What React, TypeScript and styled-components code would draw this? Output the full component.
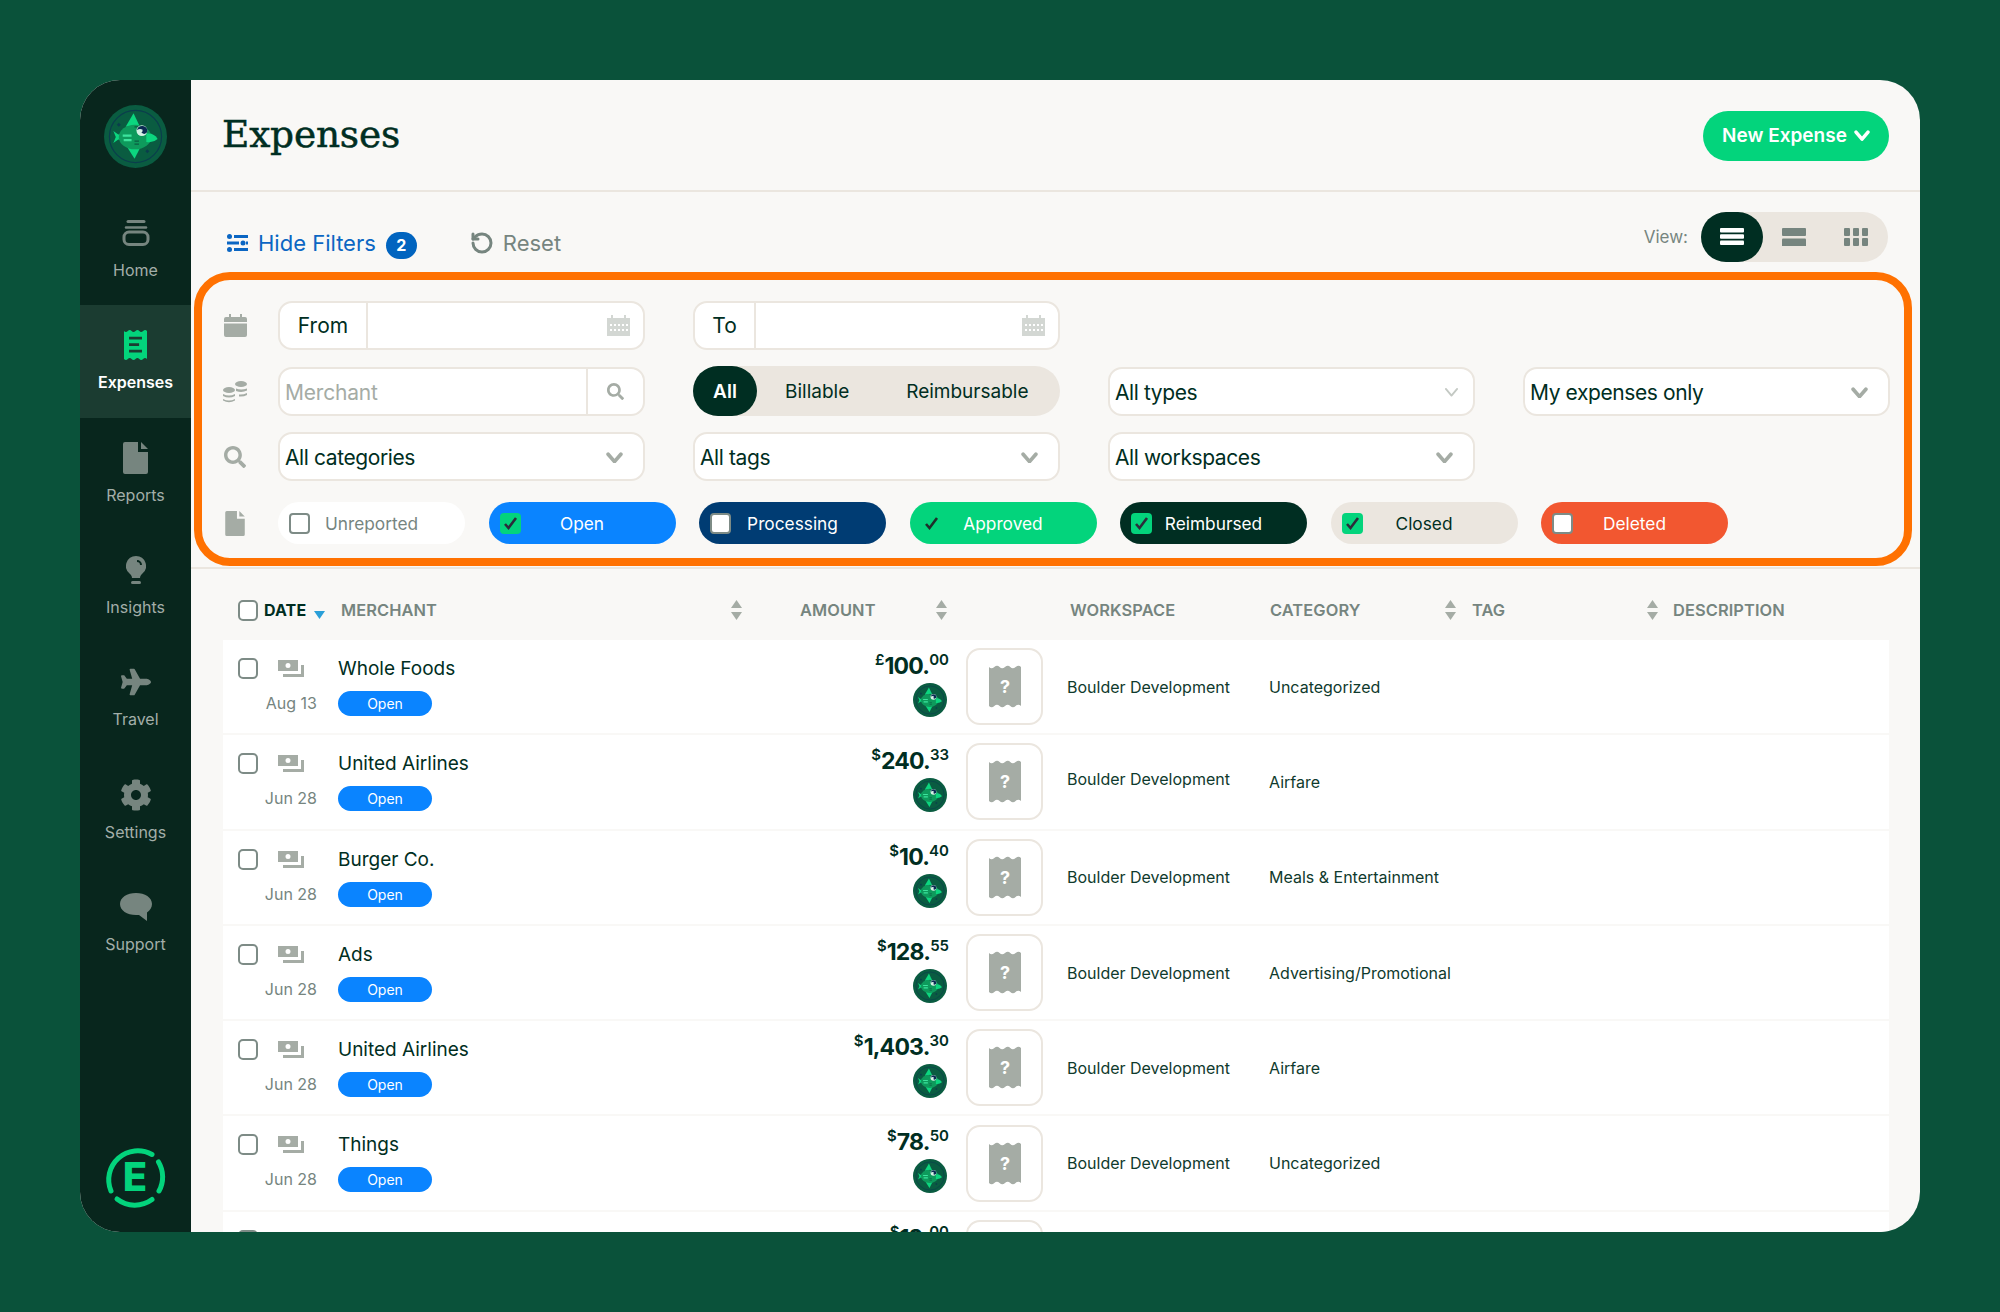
import React from "react";
import styled, { createGlobalStyle } from "styled-components";
import { FaCog, FaPlane, FaSearch } from "react-icons/fa";
import { RotateCcw } from "lucide-react";

const INK = "#002e22";
const MUTED = "#76857f";
const ICON = "#a5aca5";
const LINE = "#ebe6df";
const GREEN = "#03d47c";
const SANS = `Inter, "Liberation Sans", sans-serif`;

const Global = createGlobalStyle`
  html, body { margin: 0; padding: 0; background: #0a523a; }
  body { font-family: ${SANS}; color: ${INK}; }
  * { box-sizing: border-box; }
`;

const Page = styled.div`
  width: 2000px;
  height: 1312px;
  padding: 80px;
  background: #0a523a;
`;
const Frame = styled.div`
  display: flex;
  height: 1152px;
  border-radius: 40px;
  overflow: hidden;
  background: #f9f8f6;
`;
const Sidebar = styled.nav`
  flex: 0 0 111px;
  display: flex;
  flex-direction: column;
  align-items: stretch;
  background: #08261d;
  padding: 25px 0 24px;
`;
const LogoSlot = styled.div`
  display: flex;
  justify-content: center;
  margin-bottom: 25px;
`;
const BottomSlot = styled.div`
  margin-top: auto;
  display: flex;
  justify-content: center;
  padding-right: 1px;
`;
const NavItem = styled.div<{ $active?: boolean }>`
  height: 112.35px;
  padding-top: 22px;
  display: flex;
  flex-direction: column;
  align-items: center;
  background: ${(p) => (p.$active ? "#1b3c31" : "transparent")};
`;
const NavIcon = styled.div<{ $active?: boolean }>`
  height: 36px;
  display: flex;
  align-items: center;
  justify-content: center;
  color: ${(p) => (p.$active ? GREEN : MUTED)};
`;
const NavLabel = styled.div<{ $active?: boolean }>`
  margin-top: 9px;
  line-height: 20px;
  font-size: 16px;
  font-weight: ${(p) => (p.$active ? 600 : 400)};
  color: ${(p) => (p.$active ? "#ffffff" : "#a3aea9")};
`;
const Main = styled.main`
  flex: 1;
  min-width: 0;
  display: flex;
  flex-direction: column;
`;
const Header = styled.header`
  flex: 0 0 112px;
  display: flex;
  align-items: center;
  justify-content: space-between;
  padding: 0 31px 0 31px;
  border-bottom: 2px solid ${LINE};
`;
const Title = styled.h1`
  margin: -3px 0 0;
  font-family: "DejaVu Serif", "Liberation Serif", serif;
  font-size: 37.5px;
  font-weight: 400;
  color: ${INK};
  letter-spacing: -0.2px;
  -webkit-text-stroke: 0.5px ${INK};
`;
const NewButton = styled.button`
  width: 186px;
  height: 50px;
  margin-top: 1px;
  border: 0;
  border-radius: 25px;
  background: ${GREEN};
  color: #fff;
  font-family: ${SANS};
  font-size: 19px;
  font-weight: 600;
  display: flex;
  align-items: center;
  justify-content: center;
  gap: 7px;
  padding: 0;
`;
const Toolbar = styled.div`
  flex: 0 0 80px;
  display: flex;
  padding: 0 32px 0 36px;
  justify-content: space-between;
  align-items: flex-start;
`;
const ToolLeft = styled.div`
  display: flex;
  align-items: center;
  margin-top: 37px;
  height: 28px;
`;
const HideFilters = styled.span`
  display: flex;
  align-items: center;
  gap: 10px;
  color: #0b66c3;
  font-size: 22px;
`;
const Badge = styled.span`
  width: 31px;
  height: 27px;
  margin: 4px 0 0 10px;
  border-radius: 14px;
  background: #0164bf;
  color: #fff;
  font-size: 16px;
  font-weight: 700;
  display: flex;
  align-items: center;
  justify-content: center;
`;
const Reset = styled.span`
  display: flex;
  align-items: center;
  gap: 9px;
  margin-left: 53px;
  color: ${MUTED};
  font-size: 22px;
`;
const ViewGroup = styled.div`
  display: flex;
  align-items: center;
  gap: 13px;
  margin-top: 20px;
`;
const ViewLabel = styled.span`
  font-size: 17px;
  color: ${MUTED};
`;
const Toggle = styled.div`
  display: flex;
  align-items: center;
  width: 187px;
  height: 50px;
  border-radius: 25px;
  background: ${LINE};
`;
const ToggleItem = styled.div<{ $active?: boolean }>`
  width: 62px;
  height: 50px;
  border-radius: 25px;
  display: flex;
  align-items: center;
  justify-content: center;
  background: ${(p) => (p.$active ? INK : "transparent")};
  color: ${(p) => (p.$active ? "#fff" : MUTED)};
`;
const FilterPanel = styled.section`
  flex: 0 0 294px;
  margin: 0 8px 0 3px;
  border: 8px solid #ff7101;
  border-radius: 36px;
  padding: 21px 0 0;
`;
const FilterRow = styled.div<{ $gap?: number }>`
  display: flex;
  align-items: center;
  margin-bottom: ${(p) => p.$gap ?? 16}px;
`;
const IconSlot = styled.div`
  flex: 0 0 66px;
  margin-right: 10px;
  display: flex;
  justify-content: center;
  color: ${ICON};
`;
const FieldGrid = styled.div`
  display: grid;
  grid-template-columns: repeat(4, 367px);
  column-gap: 48px;
`;
const Field = styled.div`
  height: 49px;
  display: flex;
  align-items: stretch;
  background: #fff;
  border: 2px solid ${LINE};
  border-radius: 14px;
  font-size: 21px;
  color: ${INK};
  overflow: hidden;
`;
const FieldPrefix = styled.div<{ $w: number }>`
  flex: 0 0 ${(p) => p.$w}px;
  display: flex;
  align-items: center;
  justify-content: center;
  border-right: 2px solid ${LINE};
`;
const FieldBody = styled.div`
  flex: 1;
  display: flex;
  align-items: center;
  justify-content: flex-end;
  padding-right: 13px;
  color: #d3d7d3;
`;
const MerchantText = styled.div`
  flex: 1;
  display: flex;
  align-items: center;
  padding: 2px 0 0 5px;
  color: ${ICON};
  letter-spacing: -0.2px;
`;
const SearchCell = styled.div`
  flex: 0 0 57px;
  display: flex;
  align-items: center;
  justify-content: center;
  border-left: 2px solid ${LINE};
  color: ${ICON};
`;
const SelectField = styled(Field)`
  align-items: center;
  justify-content: space-between;
  padding: 2px 20px 0 5px;
  letter-spacing: -0.4px;
`;
const ThinChevron = styled.span`
  display: flex;
  margin-right: -6px;
`;
const Segmented = styled.div`
  height: 50px;
  margin-top: -1px;
  display: flex;
  align-items: center;
  border-radius: 25px;
  background: ${LINE};
  font-size: 19px;
  color: ${INK};
`;
const SegmentOn = styled.div`
  width: 64px;
  height: 50px;
  border-radius: 25px;
  background: ${INK};
  color: #fff;
  font-weight: 600;
  display: flex;
  align-items: center;
  justify-content: center;
`;
const Segment = styled.div<{ $left: number }>`
  margin-left: ${(p) => p.$left}px;
`;
const ChipRow = styled.div`
  display: flex;
  gap: 23.5px;
`;
const Chip = styled.div<{ $bg: string; $fg: string }>`
  width: 187px;
  height: 42px;
  border-radius: 21px;
  padding: 0 11px;
  display: grid;
  grid-template-columns: 1fr auto 1fr;
  align-items: center;
  background: ${(p) => p.$bg};
  color: ${(p) => p.$fg};
  font-size: 17.3px;
`;
const ChipBox = styled.div<{ $state: "off" | "white" | "on" | "bare" }>`
  width: 21px;
  height: 21px;
  border-radius: 4px;
  display: flex;
  align-items: center;
  justify-content: center;
  border: ${(p) =>
    p.$state === "off" || p.$state === "white" ? `2px solid #7d8b86` : "0"};
  background: ${(p) =>
    p.$state === "on" ? GREEN : p.$state === "white" ? "#fff" : "transparent"};
`;
const Divider = styled.div`
  height: 2px;
  margin-top: 1px;
  background: ${LINE};
  flex: 0 0 2px;
`;
const Table = styled.div`
  flex: 1;
  min-height: 0;
  overflow: hidden;
  padding: 0 31px 0 32px;
`;
const HeadRow = styled.div`
  height: 71px;
  padding-top: 11px;
  display: grid;
  grid-template-columns: 118px 459px 270px 200px 202px 201px 1fr;
  align-items: center;
  font-size: 16.4px;
  font-weight: 600;
  color: ${MUTED};
  letter-spacing: 0.1px;
`;
const HeadCheck = styled.div`
  display: flex;
  align-items: center;
  padding-left: 15px;
  color: ${INK};
  font-size: 16px;
  font-weight: 700;
`;
const DateLabel = styled.span`
  margin-left: 6px;
`;
const BlueSort = styled.span`
  margin: 9px 0 0 8px;
  display: flex;
`;
const HeadCell = styled.div<{ $arrow?: number }>`
  display: flex;
  align-items: center;
  justify-content: space-between;
  padding-right: ${(p) => p.$arrow ?? 0}px;
`;
const AmountHead = styled.div`
  display: flex;
  align-items: center;
  gap: 60px;
`;
const RowList = styled.div`
  display: flex;
  flex-direction: column;
  gap: 2px;
`;
const Row = styled.div`
  flex: 0 0 93.3px;
  height: 93.3px;
  display: grid;
  grid-template-columns: 115px 611px 118px 202px 1fr;
  background: #fff;
`;
const SelectCell = styled.div`
  padding: 18px 21px 0 15px;
`;
const SelectTop = styled.div`
  display: flex;
  align-items: center;
  gap: 20px;
  height: 21px;
`;
const Checkbox = styled.div`
  flex: 0 0 20px;
  width: 20px;
  height: 21px;
  border: 2px solid #7d8b86;
  border-radius: 5px;
  background: #fff;
`;
const DateText = styled.div`
  margin-top: 14px;
  text-align: right;
  font-size: 16px;
  line-height: 20px;
  color: ${MUTED};
  white-space: nowrap;
`;
const MerchantCell = styled.div`
  padding-top: 16px;
  display: grid;
  grid-template-columns: 1fr auto;
`;
const NameBlock = styled.div`
  display: flex;
  flex-direction: column;
  align-items: flex-start;
`;
const Name = styled.div`
  font-size: 19px;
  line-height: 24px;
  margin-top: 1px;
  margin-bottom: 10px;
  color: ${INK};
`;
const StatusPill = styled.div`
  width: 94px;
  height: 25px;
  border-radius: 13px;
  background: #0a84ff;
  color: #fff;
  font-size: 14px;
  display: flex;
  align-items: center;
  justify-content: center;
`;
const AmountBlock = styled.div`
  margin-top: -4px;
  display: flex;
  flex-direction: column;
  align-items: flex-end;
`;
const Amount = styled.div`
  height: 31px;
  display: flex;
  align-items: flex-start;
  color: ${INK};
  margin-top: -2px;
  margin-bottom: 2px;
`;
const Big = styled.span`
  font-size: 23px;
  font-weight: 700;
  line-height: 32px;
  letter-spacing: -0.8px;
`;
const Small = styled.span`
  font-size: 15px;
  font-weight: 600;
  line-height: 20px;
`;
const AvatarSlot = styled.div`
  margin-right: 2px;
  display: flex;
`;
const ReceiptCell = styled.div`
  display: flex;
  align-items: center;
  padding-left: 17px;
`;
const ReceiptBox = styled.div`
  width: 77px;
  height: 77px;
  border: 2px solid ${LINE};
  border-radius: 14px;
  display: flex;
  align-items: center;
  justify-content: center;
`;
const TextCell = styled.div<{ $lift?: number }>`
  display: flex;
  align-items: center;
  font-size: 16px;
  color: #0f3a2d;
  white-space: nowrap;
  margin-top: ${(p) => -(p.$lift ?? 0)}px;
`;

const Fish = ({ size }: { size: number }) => (
  <svg width={size} height={size} viewBox="0 0 64 64">
    <circle cx="32" cy="32" r="32" fill="#0a5c41" />
    <circle cx="32" cy="32" r="26.500" fill="#0a5c41" stroke="#0b3d4d" strokeWidth="1.200" />
    <polygon points="30,8.500 22,22 36,21" fill="#0cd67f" />
    <polygon points="23,42 31,54.500 37,43" fill="#0cd67f" />
    <path d="M9.500 26.500l5 3.500 4-1v7l-4-1-5 3.500 2.500-6z" fill="#0cd67f" />
    <ellipse cx="31.500" cy="32.500" rx="16.500" ry="12.500" fill="#0e9a5c" />
    <path d="M43 29q8-1 11.500 5.500-5 4.500-11.500 3z" fill="#0cd67f" />
    <path d="M19 30h9v2.200h-9zM20 34.500h8v2.200h-8z" fill="#3de39d" />
    <path d="M31 21.500h4.500v1.300h-4.500zM31 36h4.500v1.300h-4.500zM31 39h4.500v1.300h-4.500z" fill="#0a5c41" />
    <circle cx="38.500" cy="26" r="5.500" fill="#d5f1e4" />
    <path d="M33.500 25.500a5.500 5.500 0 0 1 10.500-.5 4 4 0 0 1-3 4.500q-1.500 0-3-1.500 2-1 1-3-2.500-1.500-5.500.5z" fill="#0a2a52" />
    <path d="M15 18l2 2-2 2-2-2zM44 45l2 2-2 2-2-2z" fill="#0b3d4d" />
  </svg>
);

const BrandE = () => (
  <svg width="64" height="64" viewBox="0 0 64 64">
    <g fill="none" stroke={GREEN} strokeWidth="5" strokeLinecap="round">
      <path d="M49 10.500A29 29 0 0 0 8 47" />
      <path d="M55.500 18A29 29 0 0 1 56 47" />
      <path d="M14 55A29 29 0 0 0 49 55.500" />
    </g>
    <text x="32" y="46.500" textAnchor="middle" fontFamily={SANS} fontWeight="800" fontSize="40" fill={GREEN}>
      E
    </text>
  </svg>
);

const HomeIcon = () => (
  <svg width="28" height="26" viewBox="0 0 28 26" fill="none" stroke="currentColor" strokeLinecap="round">
    <path d="M6 1.500h16" strokeWidth="3" />
    <path d="M4 7.500h20" strokeWidth="2.500" />
    <rect x="2" y="12" width="24" height="12.500" rx="5" strokeWidth="3" />
  </svg>
);
const ReceiptGlyph = ({ w, h, color, children }: { w: number; h: number; color: string; children?: React.ReactNode }) => (
  <svg width={w} height={h} viewBox="0 0 32 43">
    <path
      d="M0 2q2.500 2.500 5.300 0t5.300 0 5.400 0 5.300 0 5.300 0 5.400 0v39q-2.700-2.500-5.400 0t-5.300 0-5.300 0-5.400 0-5.300 0-5.300 0z"
      fill={color}
    />
    {children}
  </svg>
);
const ExpensesIcon = () => (
  <ReceiptGlyph w={23} h={32} color={GREEN}>
    <path d="M7 10h18v4H7zM7 19h14v4H7zM7 28h18v4H7z" fill="#1b3c31" />
  </ReceiptGlyph>
);
const DocIcon = ({ w, h }: { w: number; h: number }) => (
  <svg width={w} height={h} viewBox="0 0 25 32" fill="currentColor">
    <path d="M2 0h13v10h10v20a2 2 0 0 1-2 2H2a2 2 0 0 1-2-2V2a2 2 0 0 1 2-2z" />
    <path d="M18 0l7 7h-7z" />
  </svg>
);
const BulbIcon = () => (
  <svg width="20" height="28" viewBox="0 0 20 28" fill="currentColor">
    <path d="M10 0a10 10 0 0 1 6 18c-1 1-2 2-2 4H6c0-2-1-3-2-4a10 10 0 0 1 6-18z" />
    <rect x="5" y="25" width="10" height="3" rx="1.500" />
    <path d="M11 4a5 5 0 0 1 5 5h-2a3 3 0 0 0-3-3z" fill="#08261d" />
  </svg>
);
const BubbleIcon = () => (
  <svg width="32" height="29" viewBox="0 0 32 29" fill="currentColor">
    <path d="M16 0c9 0 16 4.500 16 11 0 3.500-2 6.500-5 8.500V28l-8-6h-3C7 22 0 17.500 0 11S7 0 16 0z" />
  </svg>
);
const CalendarSolid = () => (
  <svg width="23" height="23" viewBox="0 0 23 23" fill="currentColor">
    <path d="M5 0h2v3h9V0h2v3h3a2 2 0 0 1 2 2v3H0V5a2 2 0 0 1 2-2h3z" />
    <path d="M0 9.500h23V21a2 2 0 0 1-2 2H2a2 2 0 0 1-2-2z" />
  </svg>
);
const CalendarSmall = () => (
  <svg width="23" height="21" viewBox="0 0 23 21" fill="currentColor">
    <path d="M0 3h4V0h2v3h11V0h2v3h4v18H0z" />
    <g fill="#fff">
      <rect x="3" y="9" width="2" height="2" />
      <rect x="7" y="9" width="2" height="2" />
      <rect x="11" y="9" width="2" height="2" />
      <rect x="15" y="9" width="2" height="2" />
      <rect x="19" y="9" width="2" height="2" />
      <rect x="3" y="14" width="2" height="2" />
      <rect x="7" y="14" width="2" height="2" />
      <rect x="11" y="14" width="2" height="2" />
      <rect x="15" y="14" width="2" height="2" />
      <rect x="19" y="14" width="2" height="2" />
    </g>
  </svg>
);
const CoinsIcon = () => (
  <svg width="24" height="22" viewBox="0 0 24 22" fill="currentColor">
    <ellipse cx="18" cy="3" rx="6" ry="3" />
    <path d="M13 7.500q5 2 11 0v2q-5 2.500-11 .5zM16 13.500q4 .5 8-1.500v2q-3.500 2-8 1.500z" />
    <ellipse cx="6" cy="9" rx="6" ry="3" />
    <path d="M0 13q6 3 12 0v2q-6 3-12 0zM0 18q6 3 12 0v1.500q-6 3.500-12 0z" />
  </svg>
);
const FilterLines = () => (
  <svg width="21" height="18" viewBox="0 0 21 18" fill="currentColor">
    <circle cx="2.500" cy="2.500" r="2.500" />
    <rect x="7" y="1" width="14" height="3" />
    <rect x="0" y="7.500" width="12" height="3" />
    <circle cx="16" cy="9" r="2.500" />
    <rect x="19" y="7.500" width="2" height="3" />
    <circle cx="2.500" cy="15.500" r="2.500" />
    <rect x="7" y="14" width="14" height="3" />
  </svg>
);
const Chevron = ({ color, size = 15, weight = 3.5 }: { color: string; size?: number; weight?: number }) => (
  <svg width={size} height={size * 0.7} viewBox="0 0 16 11" fill="none" stroke={color} strokeWidth={weight} strokeLinecap="round" strokeLinejoin="round">
    <path d="M2 2l6 7 6-7" />
  </svg>
);
const SortArrows = () => (
  <svg width="11" height="20" viewBox="0 0 11 20" fill={ICON}>
    <path d="M5.500 0L11 8H0zM0 12h11l-5.500 8z" />
  </svg>
);
const Check = ({ color }: { color: string }) => (
  <svg width="15" height="15" viewBox="0 0 15 15" fill="none" stroke={color} strokeWidth="2.600">
    <path d="M2 8l3.500 4L13 2" />
  </svg>
);
const MoneyIcon = () => (
  <svg width="26" height="17" viewBox="0 0 26 17" fill={ICON}>
    <path fillRule="evenodd" d="M0 0h20v11H0zM10 3a2.500 2.500 0 1 0 0 5 2.500 2.500 0 0 0 0-5z" />
    <rect x="5" y="14" width="21" height="3" />
    <rect x="23" y="5" width="3" height="12" />
  </svg>
);
const ViewLines = ({ n }: { n: number }) => {
  const h = n === 3 ? 4.4 : 8;
  const step = n === 3 ? 6.3 : 10.5;
  return (
    <svg width="24" height="18" viewBox="0 0 24 18" fill="currentColor">
      {Array.from({ length: n }, (_, i) => (
        <rect key={i} x="0" y={i * step} width="24" height={h} rx="1" />
      ))}
    </svg>
  );
};
const ViewGrid = () => (
  <svg width="24" height="18" viewBox="0 0 24 18" fill="currentColor">
    {[0, 9, 18].flatMap((x) =>
      [0, 10].map((y) => <rect key={`${x}-${y}`} x={x} y={y} width="6" height="8" rx="1" />)
    )}
  </svg>
);

const nav = [
  { label: "Home", icon: <HomeIcon /> },
  { label: "Expenses", icon: <ExpensesIcon />, active: true },
  { label: "Reports", icon: <DocIcon w={25} h={32} /> },
  { label: "Insights", icon: <BulbIcon /> },
  { label: "Travel", icon: <FaPlane size={30} /> },
  { label: "Settings", icon: <FaCog size={32} /> },
  { label: "Support", icon: <BubbleIcon /> },
];

const chips = [
  { label: "Unreported", bg: "#ffffff", fg: MUTED, box: "off", check: "" },
  { label: "Open", bg: "#0a84ff", fg: "#ffffff", box: "on", check: "#2c2c3a" },
  { label: "Processing", bg: "#003c73", fg: "#ffffff", box: "white", check: "" },
  { label: "Approved", bg: GREEN, fg: "#ffffff", box: "bare", check: "#1f2f2a" },
  { label: "Reimbursed", bg: INK, fg: "#ffffff", box: "on", check: "#2c2c3a" },
  { label: "Closed", bg: LINE, fg: INK, box: "on", check: "#2c2c3a" },
  { label: "Deleted", bg: "#f25730", fg: "#ffffff", box: "white", check: "" },
] as const;

const rows = [
  { name: "Whole Foods", date: "Aug 13", cur: "£", whole: "100", cents: "00", cat: "Uncategorized" },
  { name: "United Airlines", date: "Jun 28", cur: "$", whole: "240", cents: "33", cat: "Airfare", lift: 5 },
  { name: "Burger Co.", date: "Jun 28", cur: "$", whole: "10", cents: "40", cat: "Meals & Entertainment" },
  { name: "Ads", date: "Jun 28", cur: "$", whole: "128", cents: "55", cat: "Advertising/Promotional" },
  { name: "United Airlines", date: "Jun 28", cur: "$", whole: "1,403", cents: "30", cat: "Airfare" },
  { name: "Things", date: "Jun 28", cur: "$", whole: "78", cents: "50", cat: "Uncategorized" },
  { name: "Things", date: "Jun 28", cur: "$", whole: "12", cents: "00", cat: "Uncategorized" },
];

export default function App() {
  return (
    <Page>
      <Global />
      <Frame>
        <Sidebar>
          <LogoSlot>
            <Fish size={63} />
          </LogoSlot>
          {nav.map((n) => (
            <NavItem key={n.label} $active={n.active}>
              <NavIcon $active={n.active}>{n.icon}</NavIcon>
              <NavLabel $active={n.active}>{n.label}</NavLabel>
            </NavItem>
          ))}
          <BottomSlot>
            <BrandE />
          </BottomSlot>
        </Sidebar>
        <Main>
          <Header>
            <Title>Expenses</Title>
            <NewButton>
              New Expense
              <Chevron color="#fff" size={16} weight={3.5} />
            </NewButton>
          </Header>
          <Toolbar>
            <ToolLeft>
              <HideFilters>
                <FilterLines />
                Hide Filters
              </HideFilters>
              <Badge>2</Badge>
              <Reset>
                <RotateCcw size={24} strokeWidth={3} />
                Reset
              </Reset>
            </ToolLeft>
            <ViewGroup>
              <ViewLabel>View:</ViewLabel>
              <Toggle>
                <ToggleItem $active>
                  <ViewLines n={3} />
                </ToggleItem>
                <ToggleItem>
                  <ViewLines n={2} />
                </ToggleItem>
                <ToggleItem>
                  <ViewGrid />
                </ToggleItem>
              </Toggle>
            </ViewGroup>
          </Toolbar>
          <FilterPanel>
            <FilterRow $gap={17}>
              <IconSlot>
                <CalendarSolid />
              </IconSlot>
              <FieldGrid>
                <Field>
                  <FieldPrefix $w={88}>From</FieldPrefix>
                  <FieldBody>
                    <CalendarSmall />
                  </FieldBody>
                </Field>
                <Field>
                  <FieldPrefix $w={61}>To</FieldPrefix>
                  <FieldBody>
                    <CalendarSmall />
                  </FieldBody>
                </Field>
              </FieldGrid>
            </FilterRow>
            <FilterRow>
              <IconSlot>
                <CoinsIcon />
              </IconSlot>
              <FieldGrid>
                <Field>
                  <MerchantText>Merchant</MerchantText>
                  <SearchCell>
                    <FaSearch size={17} />
                  </SearchCell>
                </Field>
                <Segmented>
                  <SegmentOn>All</SegmentOn>
                  <Segment $left={28}>Billable</Segment>
                  <Segment $left={57}>Reimbursable</Segment>
                </Segmented>
                <SelectField>
                  All types
                  <ThinChevron>
                    <Chevron color="#c4c9c4" size={15} weight={2} />
                  </ThinChevron>
                </SelectField>
                <SelectField>
                  My expenses only
                  <Chevron color={ICON} size={17} />
                </SelectField>
              </FieldGrid>
            </FilterRow>
            <FilterRow $gap={21}>
              <IconSlot>
                <FaSearch size={22} />
              </IconSlot>
              <FieldGrid>
                <SelectField>
                  All categories
                  <Chevron color={ICON} size={17} />
                </SelectField>
                <SelectField>
                  All tags
                  <Chevron color={ICON} size={17} />
                </SelectField>
                <SelectField>
                  All workspaces
                  <Chevron color={ICON} size={17} />
                </SelectField>
              </FieldGrid>
            </FilterRow>
            <FilterRow $gap={0}>
              <IconSlot>
                <DocIcon w={20} h={25} />
              </IconSlot>
              <ChipRow>
                {chips.map((c) => (
                  <Chip key={c.label} $bg={c.bg} $fg={c.fg}>
                    <ChipBox $state={c.box}>{c.check && <Check color={c.check} />}</ChipBox>
                    <span>{c.label}</span>
                  </Chip>
                ))}
              </ChipRow>
            </FilterRow>
          </FilterPanel>
          <Divider />
          <Table>
            <HeadRow>
              <HeadCheck>
                <Checkbox />
                <DateLabel>DATE</DateLabel>
                <BlueSort>
                  <svg width="11" height="8" viewBox="0 0 11 8" fill="#2a9fd8">
                    <path d="M0 0h11L5.500 8z" />
                  </svg>
                </BlueSort>
              </HeadCheck>
              <HeadCell $arrow={58}>
                MERCHANT
                <SortArrows />
              </HeadCell>
              <AmountHead>
                AMOUNT
                <SortArrows />
              </AmountHead>
              <HeadCell>WORKSPACE</HeadCell>
              <HeadCell $arrow={16}>
                CATEGORY
                <SortArrows />
              </HeadCell>
              <HeadCell $arrow={15}>
                TAG
                <SortArrows />
              </HeadCell>
              <HeadCell>DESCRIPTION</HeadCell>
            </HeadRow>
            <RowList>
              {rows.map((r, i) => (
                <Row key={i}>
                  <SelectCell>
                    <SelectTop>
                      <Checkbox />
                      <MoneyIcon />
                    </SelectTop>
                    <DateText>{r.date}</DateText>
                  </SelectCell>
                  <MerchantCell>
                    <NameBlock>
                      <Name>{r.name}</Name>
                      <StatusPill>Open</StatusPill>
                    </NameBlock>
                    <AmountBlock>
                      <Amount>
                        <Small>{r.cur}</Small>
                        <Big>{r.whole}.</Big>
                        <Small>{r.cents}</Small>
                      </Amount>
                      <AvatarSlot>
                        <Fish size={34} />
                      </AvatarSlot>
                    </AmountBlock>
                  </MerchantCell>
                  <ReceiptCell>
                    <ReceiptBox>
                      <ReceiptGlyph w={32} h={43} color={ICON}>
                        <text x="16" y="28" textAnchor="middle" fontFamily={SANS} fontWeight="700" fontSize="18" fill="#fff">
                          ?
                        </text>
                      </ReceiptGlyph>
                    </ReceiptBox>
                  </ReceiptCell>
                  <TextCell $lift={r.lift}>Boulder Development</TextCell>
                  <TextCell>{r.cat}</TextCell>
                </Row>
              ))}
            </RowList>
          </Table>
        </Main>
      </Frame>
    </Page>
  );
}
